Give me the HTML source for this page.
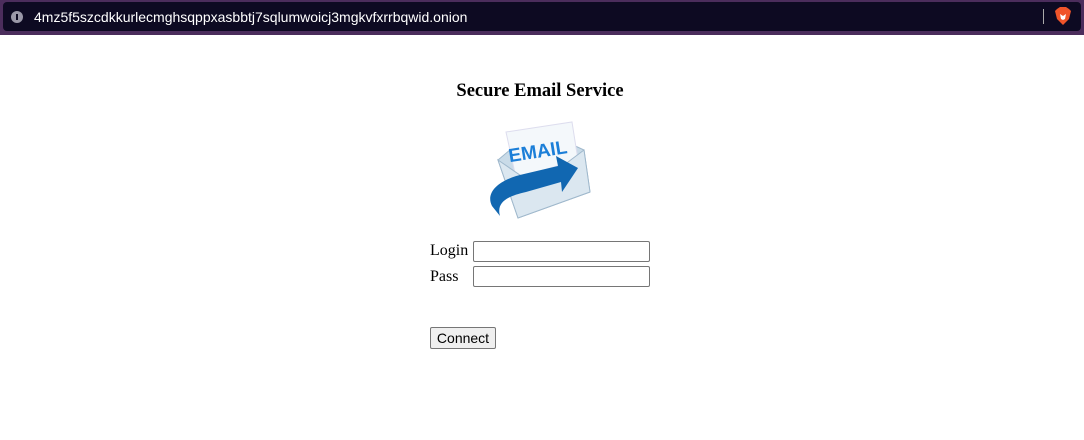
<!DOCTYPE html>
<html><head><style>
body{margin:0;width:1084px;height:440px;background:#fff;position:relative;overflow:hidden;font-family:"Liberation Serif",serif;}
.frame{position:absolute;left:0;top:0;width:1084px;height:35px;background:#4b2d5c;}
.bar{position:absolute;left:3px;top:2px;width:1078px;height:29px;background:#0d0a22;border-radius:4px;}
.url{position:absolute;left:31px;top:7px;color:#fff;font:14px "Liberation Sans",sans-serif;}
.ic{position:absolute;left:8px;top:9px;width:12px;height:12px;border-radius:50%;background:#9a98a8;}
.ic:after{content:"";position:absolute;left:5px;top:3px;width:2px;height:6px;background:#0d0a22;}
.sep{position:absolute;left:1040px;top:7px;width:1px;height:15px;background:#aaa;}
h3{position:absolute;left:0;width:1080px;text-align:center;top:81px;margin:0;font-size:18.5px;font-weight:bold;}
.lab{position:absolute;left:430px;font-size:16px;}
.inp{position:absolute;left:473px;width:175px;height:19px;border:1px solid #767676;border-radius:2px;}
.btn{position:absolute;left:430px;top:327px;width:64px;height:20px;border:1px solid #767676;border-radius:2px;background:#efefef;font:14px "Liberation Sans",sans-serif;text-align:center;line-height:20px;}
</style></head><body>
<div class="frame"><div class="bar"><div class="ic"></div><div class="url">4mz5f5szcdkkurlecmghsqppxasbbtj7sqlumwoicj3mgkvfxrrbqwid.onion</div><div class="sep"></div>
<svg style="position:absolute;left:1052px;top:5px" width="16" height="18" viewBox="0 0 16 18"><path d="M2 2 L5 0 H11 L14 2 L16 4 L14 12 L8 18 L2 12 L0 4Z" fill="#f0542a"/><path d="M5 7 L8 9 L11 7 L10 12 L8 13 L6 12Z" fill="#fff"/></svg>
</div></div>
<h3>Secure Email Service</h3>
<svg style="position:absolute;left:486px;top:120px" width="108" height="102" viewBox="0 0 108 102">
<path d="M12 40 L50 8 L98 30 L104 72 L32 98 Z" fill="#c9dbe8" stroke="#9fb8cc"/>
<path d="M20 12 L86 2 L92 40 L30 58 Z" fill="#f4f8fb" stroke="#dde"/>
<text x="22" y="38" font-family="Liberation Sans,sans-serif" font-weight="bold" font-size="19" fill="#1c7fd8" transform="rotate(-9 50 30)">EMAIL</text>
<path d="M12 40 L50 66 L98 30 L104 72 L32 98 Z" fill="#dbe7f0" stroke="#9fb8cc"/>
<path d="M6 86 C-2 70 18 58 38 54 L72 46 L70 36 L92 48 L76 72 L75 62 L40 72 C22 76 10 82 14 96 Z" fill="#1167b1"/>
</svg>
<div class="lab" style="top:242px">Login</div><div class="inp" style="top:241px"></div>
<div class="lab" style="top:268px">Pass</div><div class="inp" style="top:266px"></div>
<div class="btn">Connect</div>
</body></html>
